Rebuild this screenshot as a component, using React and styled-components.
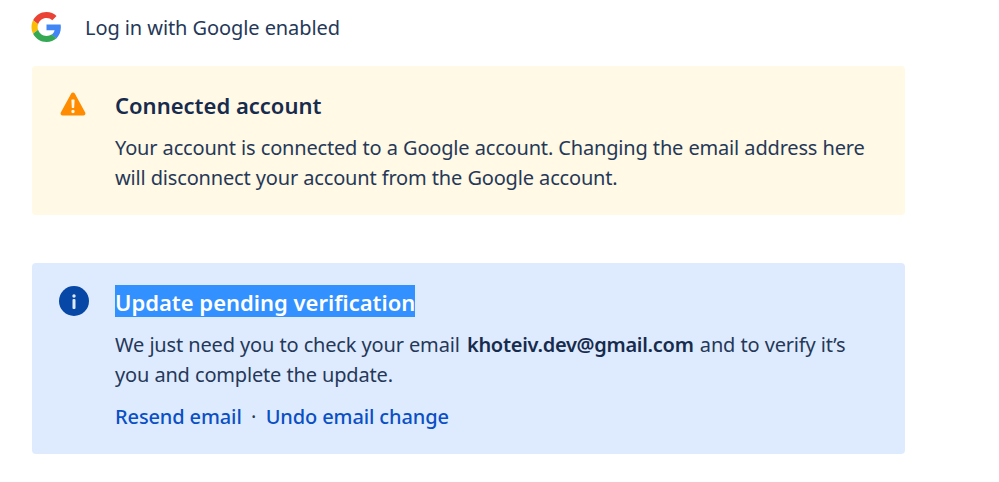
import styled, { createGlobalStyle } from "styled-components";

const GlobalStyle = createGlobalStyle`
  body {
    margin: 0;
    background: #fff;
    font-family: "Noto Sans", "Open Sans", sans-serif;
    color: #172b4d;
  }
`;

const Page = styled.div`
  width: 873px;
  padding: 12px 0 0 32px;
`;

const GoogleRow = styled.div`
  display: flex;
  align-items: center;
  gap: 23px;
  height: 30px;
  margin-left: -1px;
  margin-bottom: 24px;
`;

const GoogleText = styled.span`
  font-size: 20px;
  letter-spacing: -0.08px;
  color: #253858;
`;

const Panel = styled.section`
  display: flex;
  box-sizing: border-box;
  height: ${(p) => p.$height}px;
  margin-bottom: 48px;
  padding: 24px 24px 0 ${(p) => p.$iconLeft}px;
  background: ${(p) => p.$bg};
  border-radius: 4px;
`;

const IconSlot = styled.div`
  flex: none;
  width: ${(p) => p.$width}px;
  margin-top: ${(p) => p.$top}px;

  svg {
    display: block;
  }
`;

const Body = styled.div`
  flex: 1;
`;

const Title = styled.h3`
  height: 34px;
  margin: -2px 0 11px;
  font-size: 22px;
  line-height: 34px;
  font-weight: 600;
  color: #172b4d;
`;

const Highlight = styled.span`
  display: inline-block;
  height: 32px;
  background: #3390ff;
  color: #fff;
`;

const Text = styled.p`
  margin: 0;
  font-size: 20px;
  line-height: 30px;
  letter-spacing: -0.18px;
  word-spacing: 0.25px;
  color: #253858;

  strong {
    margin: 0 1px 0 2px;
    font-weight: 600;
    letter-spacing: -0.28px;
    color: #172b4d;
  }
`;

const Actions = styled.div`
  display: flex;
  align-items: center;
  margin-top: 12px;
  font-size: 20px;
  line-height: 30px;
  letter-spacing: -0.12px;
`;

const ActionLink = styled.a`
  font-weight: 500;
  color: #0a4fc4;
  text-decoration: none;
`;

const Dot = styled.span`
  width: 24px;
  text-align: center;
  color: #253858;
`;

const GoogleLogo = () => (
  <svg width="31" height="30" viewBox="0 0 48 48">
    <path fill="#EA4335" d="M24 9.5c3.54 0 6.71 1.22 9.21 3.6l6.85-6.85C35.9 2.38 30.47 0 24 0 14.62 0 6.51 5.38 2.56 13.22l7.98 6.19C12.43 13.72 17.74 9.5 24 9.5z" />
    <path fill="#4285F4" d="M46.98 24.55c0-1.57-.15-3.09-.38-4.55H24v9.02h12.94c-.58 2.96-2.26 5.48-4.78 7.18l7.73 6c4.51-4.18 7.09-10.36 7.09-17.65z" />
    <path fill="#FBBC05" d="M10.53 28.59c-.48-1.45-.76-2.99-.76-4.59s.27-3.14.76-4.59l-7.98-6.19C.92 16.46 0 20.12 0 24c0 3.88.92 7.54 2.56 10.78l7.97-6.19z" />
    <path fill="#34A853" d="M24 48c6.48 0 11.93-2.13 15.89-5.81l-7.73-6c-2.15 1.45-4.92 2.3-8.16 2.3-6.26 0-11.57-4.22-13.47-9.91l-7.98 6.19C6.51 42.62 14.62 48 24 48z" />
  </svg>
);

const WarningIcon = () => (
  <svg width="26" height="24" viewBox="0 0 26 24">
    <path
      fill="#ff8b00"
      fillRule="evenodd"
      d="M11.2 1.6c.8-1.4 2.8-1.4 3.6 0l10.4 19c.7 1.4-.2 3-1.8 3H2.6c-1.6 0-2.5-1.6-1.8-3l10.4-19zM12 7.5h2c.4 0 .6.3.6.6l-.4 7.4c0 .3-.3.6-.6.6h-1.2c-.3 0-.6-.3-.6-.6l-.4-7.4c0-.3.2-.6.6-.6zM13 17.8a1.7 1.7 0 1 1 0 3.4 1.7 1.7 0 0 1 0-3.4z"
    />
  </svg>
);

const InfoIcon = () => (
  <svg width="30" height="30" viewBox="0 0 30 30">
    <circle cx="15" cy="15" r="15" fill="#0747a6" />
    <circle cx="15" cy="10" r="1.7" fill="#deebff" />
    <rect x="13.5" y="13" width="3" height="10" rx="1" fill="#deebff" />
  </svg>
);

const App = () => (
  <Page>
    <GlobalStyle />
    <GoogleRow>
      <GoogleLogo />
      <GoogleText>Log in with Google enabled</GoogleText>
    </GoogleRow>

    <Panel $bg="#fff9e5" $height={149} $iconLeft={28}>
      <IconSlot $width={55} $top={2}>
        <WarningIcon />
      </IconSlot>
      <Body>
        <Title>Connected account</Title>
        <Text>
          Your account is connected to a Google account. Changing the email address here
          <br />
          will disconnect your account from the Google account.
        </Text>
      </Body>
    </Panel>

    <Panel $bg="#deebff" $height={191} $iconLeft={27}>
      <IconSlot $width={56} $top={-1}>
        <InfoIcon />
      </IconSlot>
      <Body>
        <Title>
          <Highlight>Update pending verification</Highlight>
        </Title>
        <Text>
          We just need you to check your email <strong>khoteiv.dev@gmail.com</strong> and to verify it’s
          <br />
          you and complete the update.
        </Text>
        <Actions>
          <ActionLink href="#">Resend email</ActionLink>
          <Dot>·</Dot>
          <ActionLink href="#">Undo email change</ActionLink>
        </Actions>
      </Body>
    </Panel>
  </Page>
);

export default App;
